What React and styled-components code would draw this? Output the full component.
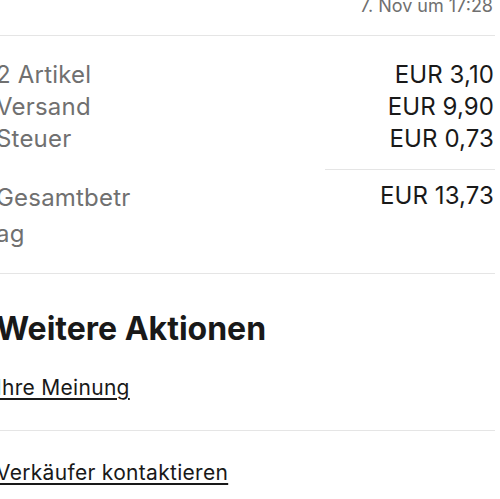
import React from "react";
import styled, { createGlobalStyle } from "styled-components";

const Global = createGlobalStyle`
  html, body { margin: 0; padding: 0; background: #fff; }
  body { font-family: Inter, "Noto Sans", sans-serif; color: #191919; overflow: hidden; }
`;

const Page = styled.div`
  width: 499px;
  margin-left: -4px;
`;

const Header = styled.div`
  margin-top: -5px;
  padding-bottom: 18px;
  border-bottom: 1px solid #e5e5e5;
  text-align: right;
  padding-right: 2px;
`;

const Timestamp = styled.span`
  display: block;
  font-size: 18px;
  line-height: 22px;
  color: #707070;
`;

const Summary = styled.section`
  padding: 23px 0 21px;
  border-bottom: 1px solid #e5e5e5;
`;

const Row = styled.div`
  display: grid;
  grid-template-columns: 141px 1fr;
  align-items: start;
`;

const Label = styled.div`
  font-size: 24px;
  line-height: ${(p) => (p.$total ? "36px" : "32px")};
  letter-spacing: 0.2px;
  color: #707070;
  word-break: break-all;
`;

const Value = styled.div`
  font-size: 24px;
  line-height: 32px;
  letter-spacing: 0.1px;
  color: #191919;
  text-align: right;
  padding-right: 1px;
`;

const Divider = styled.div`
  margin: 14px 0 10px auto;
  width: 170px;
  height: 1px;
  background: #e5e5e5;
`;

const Actions = styled.section`
  padding-top: 36px;
`;

const Heading = styled.h2`
  margin: 0;
  font-size: 32px;
  line-height: 38px;
  font-weight: 700;
  color: #191919;
`;

const LinkList = styled.ul`
  list-style: none;
  margin: 0;
  padding: 0;
`;

const LinkItem = styled.li`
  padding: 28px 0 30px;
  & + & { border-top: 1px solid #e5e5e5; padding-top: 30px; }
`;

const ActionLink = styled.a`
  display: inline-block;
  font-size: 21px;
  line-height: 24px;
  letter-spacing: 0.3px;
  color: #191919;
  text-decoration: underline;
  text-decoration-thickness: 1.5px;
  text-underline-offset: 3px;
`;

const rows = [
  ["2 Artikel", "EUR 3,10"],
  ["Versand", "EUR 9,90"],
  ["Steuer", "EUR 0,73"],
];

export default function App() {
  return (
    <Page>
      <Global />
      <Header>
        <Timestamp>7. Nov um 17:28</Timestamp>
      </Header>
      <Summary>
        {rows.map(([l, v]) => (
          <Row key={l}>
            <Label>{l}</Label>
            <Value>{v}</Value>
          </Row>
        ))}
        <Divider />
        <Row>
          <Label $total>Gesamtbetrag</Label>
          <Value>EUR 13,73</Value>
        </Row>
      </Summary>
      <Actions>
        <Heading>Weitere Aktionen</Heading>
        <LinkList>
          <LinkItem>
            <ActionLink href="#">Ihre Meinung</ActionLink>
          </LinkItem>
          <LinkItem>
            <ActionLink href="#">Verkäufer kontaktieren</ActionLink>
          </LinkItem>
        </LinkList>
      </Actions>
    </Page>
  );
}
